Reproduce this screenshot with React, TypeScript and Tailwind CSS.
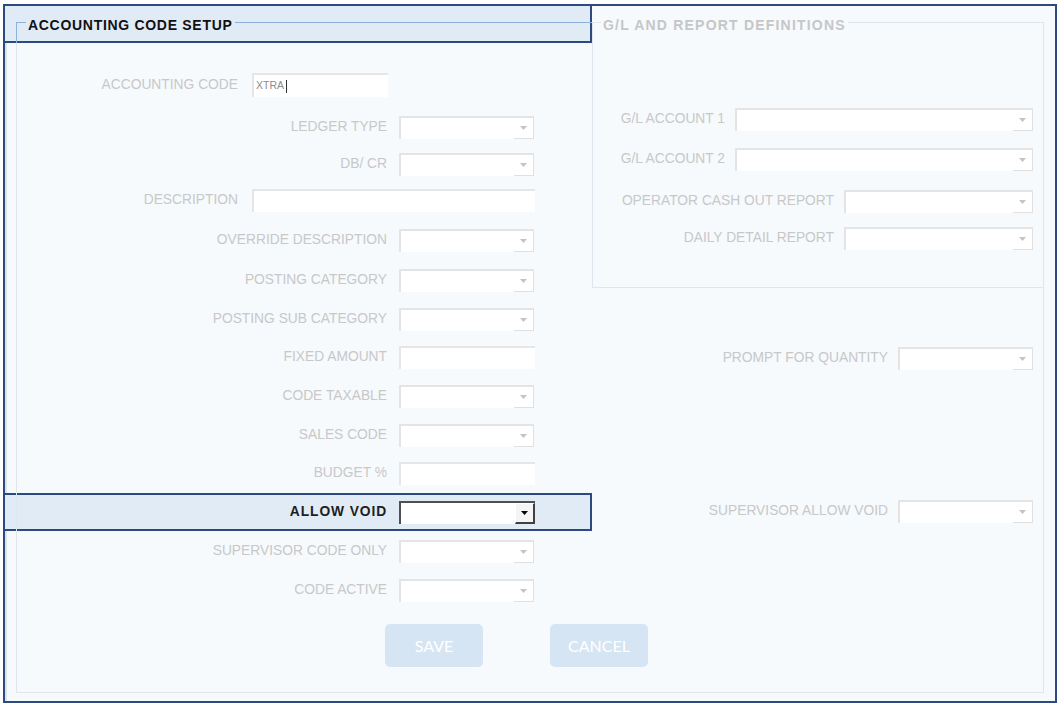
import React from 'react';

const FONT = { fontFamily: '"Liberation Sans", Arial, sans-serif' };

function Arrow({ dark }: { dark?: boolean }) {
  return (
    <svg width="7" height="4" viewBox="0 0 7 4">
      <polygon points="0,0 7,0 3.5,4" fill={dark ? '#000000' : '#c4c4c4'} />
    </svg>
  );
}

function Select({ w, active }: { w: string; active?: boolean }) {
  if (active) {
    return (
      <div className={`flex h-[23px] ${w} bg-white border-t-2 border-l-2 border-t-[#505050] border-l-[#505050]`}>
        <div className="ml-auto flex h-full w-[20px] items-center justify-center border-t border-l border-white border-r-2 border-b-2 border-r-[#404040] border-b-[#404040] bg-[#f4f4f4]">
          <Arrow dark />
        </div>
      </div>
    );
  }
  return (
    <div className={`flex h-[23px] ${w} bg-white border-t-2 border-l-2 border-[#e4e4e4]`}>
      <div className="ml-auto flex h-full w-[20px] items-center justify-center border-r border-b border-[#e0e0e0]">
        <Arrow />
      </div>
    </div>
  );
}

function TextBox({ w, children }: { w: string; children?: React.ReactNode }) {
  return (
    <div className={`flex h-[23px] ${w} items-center bg-white border-t-2 border-l-2 border-[#e6e6e6]`}>
      {children}
    </div>
  );
}

function LeftRow({
  label,
  mt,
  children,
  short,
  dark,
}: {
  label: string;
  mt: string;
  children: React.ReactNode;
  short?: boolean;
  dark?: boolean;
}) {
  return (
    <div className={`flex items-center ${mt}`}>
      <div
        className={`${short ? 'w-[221px]' : 'w-[370px]'} text-right text-[13.8px] whitespace-nowrap ${
          dark ? 'font-bold tracking-[0.9px] text-[#1e1e1e]' : 'text-[#c8c8c8]'
        }`}
      >
        {label}
      </div>
      <div className={short ? 'ml-[14px]' : 'ml-[12px]'}>{children}</div>
    </div>
  );
}

function RightRow({ label, mt, children }: { label: string; mt: string; children: React.ReactNode }) {
  return (
    <div className={`flex items-center justify-end pr-[10px] ${mt}`}>
      <div className="text-right text-[13.8px] whitespace-nowrap text-[#c8c8c8]">{label}</div>
      <div className="ml-[10px]">{children}</div>
    </div>
  );
}

export default function App() {
  return (
    <div className="h-[706px] w-[1060px] bg-white pl-[3px] pt-[4px]" style={FONT}>
      <div className="relative h-[699px] w-[1054px] border-2 border-[#2c4a80] bg-[#f6fafd]">
        {/* inner shade along the left edge of the frame */}
        <div className="absolute left-0 top-[37px] bottom-0 w-[2px] bg-[#dde3ea]" />

        {/* focus highlights */}
        <div className="absolute -left-[2px] -top-[2px] h-[39px] w-[589px] border-2 border-[#2c4a80] bg-[#e1ebf6]" />
        <div className="absolute -left-[2px] top-[487px] h-[38px] w-[589px] border-2 border-[#2c4a80] bg-[#e1ebf6]" />

        <div className="relative z-10 ml-[11px] mt-[16px] h-[671px] w-[1028px] border border-[#dfe6ee]">
          {/* blue part of the fieldset corner inside the header highlight */}
          <div className="absolute -left-px -top-px h-[21px] w-[576px] border-l border-t border-[#8db1da]" />
          <span className="absolute left-[9px] -top-[6px] bg-[#e1ebf6] px-[2px] text-[14px] font-bold leading-[16px] tracking-[0.7px] text-[#111111]">
            ACCOUNTING CODE SETUP
          </span>

          <div className="flex">
            {/* left column */}
            <div className="w-[575px]">
              <LeftRow label="ACCOUNTING CODE" mt="mt-[50px]" short>
                <div className="flex h-[24px] w-[136px] items-center bg-white border-t-2 border-l-2 border-[#e6e6e6] pl-[2px]">
                  <span className="text-[10.5px] text-[#8c8c8c]">XTRA</span>
                  <span className="ml-[2px] h-[13px] w-px bg-[#333333]" />
                </div>
              </LeftRow>
              <LeftRow label="LEDGER TYPE" mt="mt-[19px]">
                <Select w="w-[135px]" />
              </LeftRow>
              <LeftRow label="DB/ CR" mt="mt-[14px]">
                <Select w="w-[135px]" />
              </LeftRow>
              <LeftRow label="DESCRIPTION" mt="mt-[13px]" short>
                <TextBox w="w-[283px]" />
              </LeftRow>
              <LeftRow label="OVERRIDE DESCRIPTION" mt="mt-[17px]">
                <Select w="w-[135px]" />
              </LeftRow>
              <LeftRow label="POSTING CATEGORY" mt="mt-[17px]">
                <Select w="w-[135px]" />
              </LeftRow>
              <LeftRow label="POSTING SUB CATEGORY" mt="mt-[16px]">
                <Select w="w-[135px]" />
              </LeftRow>
              <LeftRow label="FIXED AMOUNT" mt="mt-[15px]">
                <TextBox w="w-[136px]" />
              </LeftRow>
              <LeftRow label="CODE TAXABLE" mt="mt-[16px]">
                <Select w="w-[135px]" />
              </LeftRow>
              <LeftRow label="SALES CODE" mt="mt-[16px]">
                <Select w="w-[135px]" />
              </LeftRow>
              <LeftRow label="BUDGET %" mt="mt-[15px]">
                <TextBox w="w-[136px]" />
              </LeftRow>
              <LeftRow label="ALLOW VOID" mt="mt-[16px]" dark>
                <Select w="w-[136px]" active />
              </LeftRow>
              <LeftRow label="SUPERVISOR CODE ONLY" mt="mt-[16px]">
                <Select w="w-[135px]" />
              </LeftRow>
              <LeftRow label="CODE ACTIVE" mt="mt-[16px]">
                <Select w="w-[135px]" />
              </LeftRow>
            </div>

            {/* right column */}
            <div className="flex-1">
              <div className="relative -mr-px -mt-px h-[266px] border border-[#dfe6ee]">
                <span className="absolute left-[8px] -top-[6px] bg-[#f6fafd] px-[2px] text-[14px] font-bold leading-[16px] tracking-[1.2px] text-[#c6c6c6]">
                  G/L AND REPORT DEFINITIONS
                </span>
                <RightRow label="G/L ACCOUNT 1" mt="mt-[85px]">
                  <Select w="w-[298px]" />
                </RightRow>
                <RightRow label="G/L ACCOUNT 2" mt="mt-[17px]">
                  <Select w="w-[298px]" />
                </RightRow>
                <RightRow label="OPERATOR CASH OUT REPORT" mt="mt-[19px]">
                  <Select w="w-[189px]" />
                </RightRow>
                <RightRow label="DAILY DETAIL REPORT" mt="mt-[14px]">
                  <Select w="w-[189px]" />
                </RightRow>
              </div>
              <RightRow label="PROMPT FOR QUANTITY" mt="mt-[59px]">
                <Select w="w-[135px]" />
              </RightRow>
              <RightRow label="SUPERVISOR ALLOW VOID" mt="mt-[130px]">
                <Select w="w-[135px]" />
              </RightRow>
            </div>
          </div>

          {/* buttons */}
          <div className="ml-[368px] mt-[22px] flex gap-[67px]" style={{ fontFamily: 'Lato, "Open Sans", sans-serif' }}>
            <button className="h-[43px] w-[98px] rounded-[5px] bg-[#d6e5f3] text-[16px] text-white">SAVE</button>
            <button className="h-[43px] w-[98px] rounded-[5px] bg-[#d6e5f3] text-[16px] text-white">CANCEL</button>
          </div>
        </div>
      </div>
    </div>
  );
}
